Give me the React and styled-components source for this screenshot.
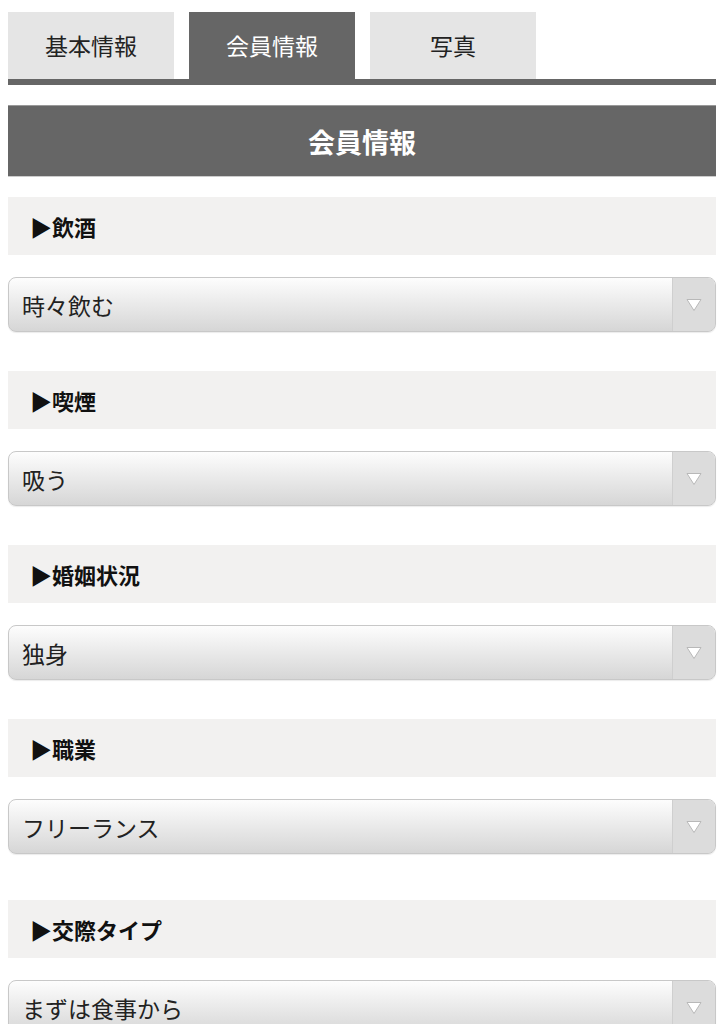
import React from 'react';
import styled, { createGlobalStyle } from 'styled-components';

const GlobalStyle = createGlobalStyle`
	body {
		margin: 0;
		background: #fff;
		font-family: 'Noto Sans CJK JP', 'Noto Sans', sans-serif;
		color: #222;
	}
`;

const Page = styled.div`
	padding: 12px 10px 0 8px;
`;

const Tabs = styled.div`
	display: flex;
	gap: 15px;
	border-bottom: 6px solid #666;
`;

const Tab = styled.div`
	width: 166px;
	height: 67px;
	display: flex;
	align-items: center;
	justify-content: center;
	padding-bottom: 2px;
	box-sizing: border-box;
	font-size: 23px;
	background: ${({ active }) => (active ? '#666' : '#e5e5e5')};
	color: ${({ active }) => (active ? '#fff' : '#222')};
`;

const Header = styled.h2`
	margin: 20px 0 0;
	height: 72px;
	display: flex;
	align-items: center;
	justify-content: center;
	background: #666;
	border-top: 1px solid #999;
	border-bottom: 1px solid #ccc;
	box-sizing: border-box;
	color: #fff;
	font-size: 27px;
	font-weight: 700;
`;

const Label = styled.div`
	margin-top: ${({ gap }) => gap}px;
	height: 58px;
	display: flex;
	align-items: center;
	padding-left: 22px;
	background: #f2f1f0;
	font-size: 22px;
	font-weight: 700;
	color: #111;
`;

const Select = styled.div`
	margin-top: 22px;
	height: 55px;
	display: flex;
	box-sizing: border-box;
	border: 1px solid #c8c8c8;
	border-radius: 8px;
	overflow: hidden;
	background: linear-gradient(#fdfdfd, #d6d6d6);
	box-shadow: 0 1px 1px rgba(0, 0, 0, 0.08);
`;

const Value = styled.div`
	flex: 1;
	display: flex;
	align-items: center;
	padding-left: 13px;
	font-size: 23px;
	color: #222;
`;

const Arrow = styled.div`
	width: 42px;
	display: flex;
	align-items: center;
	justify-content: center;
	border-left: 1px solid #cfcfcf;
	background: #dcdcdc;
`;

const fields = [
	{ label: '飲酒', value: '時々飲む' },
	{ label: '喫煙', value: '吸う' },
	{ label: '婚姻状況', value: '独身' },
	{ label: '職業', value: 'フリーランス' },
	{ label: '交際タイプ', value: 'まずは食事から', gap: 46 },
];

export default function App() {
	return (
		<Page>
			<GlobalStyle />
			<Tabs>
				<Tab>基本情報</Tab>
				<Tab active>会員情報</Tab>
				<Tab>写真</Tab>
			</Tabs>
			<Header>会員情報</Header>
			{fields.map((f, i) => (
				<React.Fragment key={f.label}>
					<Label gap={i === 0 ? 20 : f.gap || 39}>▶{f.label}</Label>
					<Select>
						<Value>{f.value}</Value>
						<Arrow>
							<svg width="16" height="14" viewBox="0 0 16 14">
								<path d="M1 1.5 L15 1.5 L8 12.5 Z" fill="#fff" stroke="#b8b8b8" strokeWidth="1" />
							</svg>
						</Arrow>
					</Select>
				</React.Fragment>
			))}
		</Page>
	);
}
